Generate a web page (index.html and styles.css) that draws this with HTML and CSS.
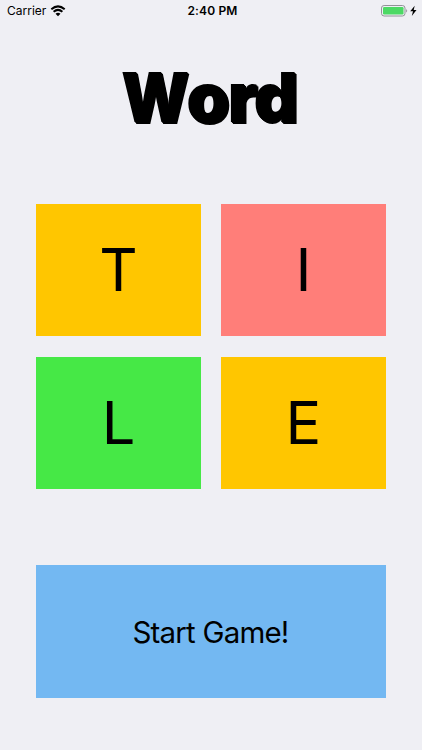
FILE: index.html
```html
<!DOCTYPE html>
<html lang="en">
<head>
<meta charset="utf-8">
<title>Word Tile</title>
<link rel="stylesheet" href="styles.css">
</head>
<body>
<header class="status">
  <div class="carrier"><span>Carrier</span>
    <svg class="wifi" viewBox="0 0 16 12" width="16" height="12"><path d="M1.3 4.3Q8-1.5 14.7 4.3M3.6 6.7Q8 3 12.4 6.7" fill="none" stroke="#000" stroke-width="2"/><path d="M5.5 8.7Q8 6.7 10.5 8.7L8 11.3Z"/></svg>
  </div>
  <time class="time">2:40 PM</time>
  <div class="power">
    <svg width="36" height="12" viewBox="0 0 36 12"><rect x=".5" y=".5" width="23.5" height="10.5" rx="2.6" fill="none" stroke="#929297"/><rect x="2" y="2" width="20.5" height="7.5" rx="1.2" fill="#4cd964"/><path d="M25.2 4Q27.2 5.8 25.2 7.6Z" fill="#929297"/><path d="M33.7 .7L29.2 6.3H32L30.8 11L35.5 4.9H32.7Z"/></svg>
  </div>
</header>
<main class="screen">
  <h1 class="title"><span class="initial">W</span><span>ord</span></h1>
  <div class="tiles">
    <div class="tile yellow"><span>T</span></div>
    <div class="tile red"><span>I</span></div>
    <div class="tile green"><span>L</span></div>
    <div class="tile yellow"><span>E</span></div>
  </div>
  <button class="start"><span>Start Game!</span></button>
</main>
</body>
</html>
```
FILE: styles.css
```css
* { box-sizing: border-box; }
body { margin: 0; width: 422px; height: 750px; overflow: hidden; background: #efeff4; color: #000; font-family: Inter, sans-serif; }
.status { height: 22px; padding: 0 5px 0 7px; display: grid; grid-template-columns: 1fr auto 1fr; align-items: center; font-size: 12px; }
.carrier { display: flex; align-items: center; gap: 4px; }
.time { font-weight: 600; letter-spacing: .15px; padding-left: 1px; }
.carrier span, .time { margin-top: -1px; }
.power { display: flex; justify-content: flex-end; }
.screen { padding: 0 36px; }
.title { height: 182px; margin: 0; padding: 33px 0 0 84.5px; white-space: nowrap; font-size: 69px; line-height: 84px; font-weight: 900; letter-spacing: -1.8px; text-shadow: 1px 1px #000, 2px 2px #000; }
.initial { display: inline-block; transform: scaleX(.91); transform-origin: left; letter-spacing: -9px; }
.tiles { display: grid; grid-template-columns: 165px 165px; grid-template-rows: 132px 132px; gap: 21px 20px; }
.tile { display: flex; align-items: center; justify-content: center; padding-bottom: 2px; font-size: 59.5px; }
.yellow { background: #ffc600; }
.red { background: #ff7e79; }
.green { background: #46e846; }
.start { display: flex; align-items: center; justify-content: center; width: 350px; height: 133px; margin-top: 76px; padding: 0 1px 0 0; border: 0; background: #73b8f2; color: #000; font: 29.5px Inter, sans-serif; letter-spacing: -.8px; }
```
